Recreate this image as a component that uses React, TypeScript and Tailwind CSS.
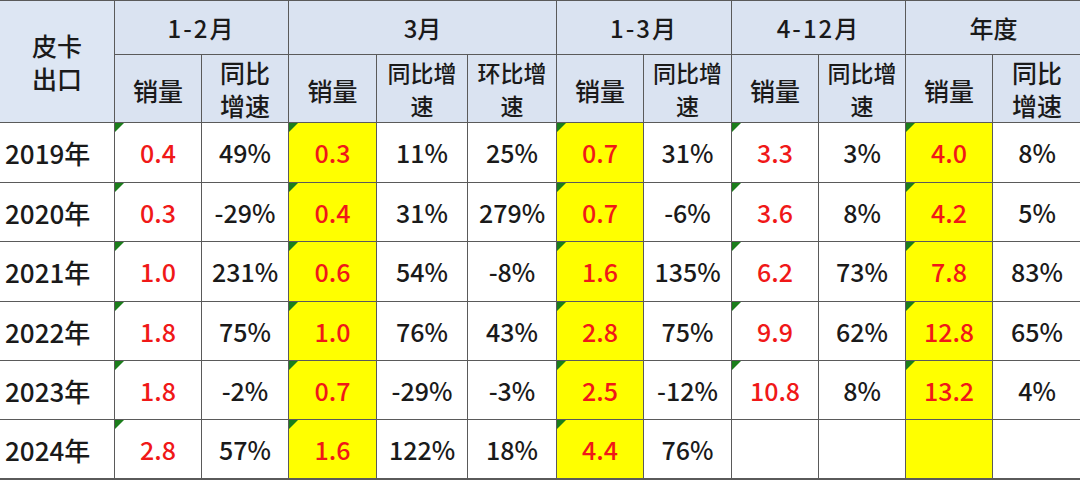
import React from 'react';

const years = ['2019年', '2020年', '2021年', '2022年', '2023年', '2024年'];

// 11 data columns per year
const rows: string[][] = [
    ['0.4', '49%', '0.3', '11%', '25%', '0.7', '31%', '3.3', '3%', '4.0', '8%'],
    ['0.3', '-29%', '0.4', '31%', '279%', '0.7', '-6%', '3.6', '8%', '4.2', '5%'],
    ['1.0', '231%', '0.6', '54%', '-8%', '1.6', '135%', '6.2', '73%', '7.8', '83%'],
    ['1.8', '75%', '1.0', '76%', '43%', '2.8', '75%', '9.9', '62%', '12.8', '65%'],
    ['1.8', '-2%', '0.7', '-29%', '-3%', '2.5', '-12%', '10.8', '8%', '13.2', '4%'],
    ['2.8', '57%', '1.6', '122%', '18%', '4.4', '76%', '', '', '', ''],
];

const salesCols = [0, 2, 5, 7, 9];
const yellowCols = [2, 5, 9];

const App: React.FC = () => {
    return (
        <div className="w-[1080px] h-[480px] bg-white overflow-hidden font-['Noto_Sans_CJK_SC','Noto_Sans',sans-serif]">
            <div className="grid grid-cols-[114px_86px_86px_87px_90px_88px_86px_87px_86px_86px_86px_88px] grid-rows-[53px_67px_59px_58px_59px_58px_58px_58px] gap-px bg-[#5a5a5a] border-t border-b-2 border-[#5a5a5a] text-[25px] font-medium text-[#1a1a1a] leading-[33px]">
                <div className="row-span-2 bg-[#dde6f3] flex items-center justify-center text-center">
                    皮卡<br />出口
                </div>
                <div className="col-span-2 bg-[#dae3f1] flex items-center justify-center tracking-[2px] text-[24px]">1-2月</div>
                <div className="col-span-3 bg-[#dae3f1] flex items-center justify-center text-[24px]">3月</div>
                <div className="col-span-2 bg-[#dae3f1] flex items-center justify-center tracking-[2px] text-[24px]">1-3月</div>
                <div className="col-span-2 bg-[#dae3f1] flex items-center justify-center tracking-[2px] text-[24px]">4-12月</div>
                <div className="col-span-2 bg-[#dae3f1] flex items-center justify-center text-[24px]">年度</div>

                <div className="bg-[#dae3f1] flex items-center justify-center pt-1">销量</div>
                <div className="bg-[#dae3f1] flex items-center justify-center text-center">同比<br />增速</div>
                <div className="bg-[#dae3f1] flex items-center justify-center pt-1">销量</div>
                <div className="bg-[#dae3f1] flex items-center justify-center text-center text-[23px]">同比增<br />速</div>
                <div className="bg-[#dae3f1] flex items-center justify-center text-center text-[23px]">环比增<br />速</div>
                <div className="bg-[#dae3f1] flex items-center justify-center pt-1">销量</div>
                <div className="bg-[#dae3f1] flex items-center justify-center text-center text-[23px]">同比增<br />速</div>
                <div className="bg-[#dae3f1] flex items-center justify-center pt-1">销量</div>
                <div className="bg-[#dae3f1] flex items-center justify-center text-center text-[23px]">同比增<br />速</div>
                <div className="bg-[#dae3f1] flex items-center justify-center pt-1">销量</div>
                <div className="bg-[#dae3f1] flex items-center justify-center text-center">同比<br />增速</div>

                {rows.map((r, ri) => (
                    <React.Fragment key={years[ri]}>
                        <div className="bg-white flex items-center pl-[5px] text-[26px]">{years[ri]}</div>
                        {r.map((v, ci) => {
                            const sales = salesCols.includes(ci);
                            const yellow = yellowCols.includes(ci);
                            return (
                                <div
                                    key={ci}
                                    className={`relative flex items-center justify-center text-[25px] ${yellow ? 'bg-[#ffff00]' : 'bg-white'} ${sales ? 'text-[#f01818]' : ''}`}
                                >
                                    {sales && v !== '' && (
                                        <span className="absolute top-0 left-0 w-0 h-0 border-t-[9px] border-r-[9px] border-t-[#1b7d1b] border-r-transparent" />
                                    )}
                                    {v}
                                </div>
                            );
                        })}
                    </React.Fragment>
                ))}
            </div>
        </div>
    );
};

export default App;
